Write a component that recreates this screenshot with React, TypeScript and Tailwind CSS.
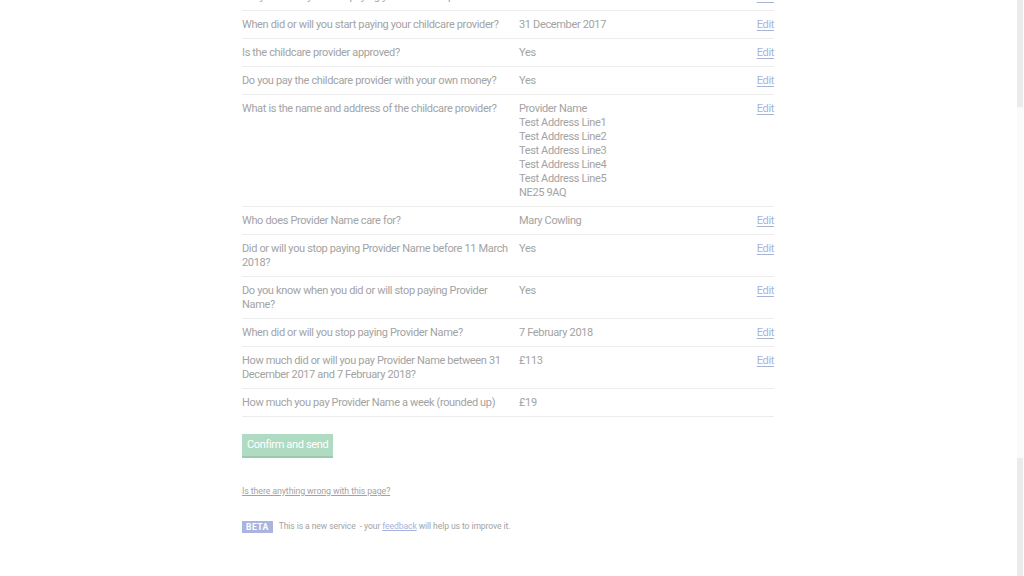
import React from "react";

interface Row {
  question: string;
  answer: string[];
  edit: boolean;
}

const rows: Row[] = [
  { question: "Did you or will you start paying your childcare provider?", answer: ["Yes"], edit: true },
  { question: "When did or will you start paying your childcare provider?", answer: ["31 December 2017"], edit: true },
  { question: "Is the childcare provider approved?", answer: ["Yes"], edit: true },
  { question: "Do you pay the childcare provider with your own money?", answer: ["Yes"], edit: true },
  {
    question: "What is the name and address of the childcare provider?",
    answer: [
      "Provider Name",
      "Test Address Line1",
      "Test Address Line2",
      "Test Address Line3",
      "Test Address Line4",
      "Test Address Line5",
      "NE25 9AQ",
    ],
    edit: true,
  },
  { question: "Who does Provider Name care for?", answer: ["Mary Cowling"], edit: true },
  { question: "Did or will you stop paying Provider Name before 11 March 2018?", answer: ["Yes"], edit: true },
  { question: "Do you know when you did or will stop paying Provider Name?", answer: ["Yes"], edit: true },
  { question: "When did or will you stop paying Provider Name?", answer: ["7 February 2018"], edit: true },
  {
    question: "How much did or will you pay Provider Name between 31 December 2017 and 7 February 2018?",
    answer: ["£113"],
    edit: true,
  },
  { question: "How much you pay Provider Name a week (rounded up)", answer: ["£19"], edit: false },
];

function SummaryRow({ row }: { row: Row }) {
  return (
    <div className="grid grid-cols-[277px_1fr_auto] border-b border-[#ececec] pt-[7px] pb-[6px] leading-[14px]">
      <div className="pr-[6px]">{row.question}</div>
      <div>
        {row.answer.map((line, i) => (
          <div key={i}>{line}</div>
        ))}
      </div>
      <div className="text-right">
        {row.edit && <a className="underline text-[#a7b3db] underline-offset-2 decoration-1">Edit</a>}
      </div>
    </div>
  );
}

export default function App() {
  return (
    <div className="w-[1024px] h-[576px] overflow-hidden bg-white flex font-['Roboto',sans-serif] text-[#a3a3a3]">
      {/* page */}
      <div className="flex-1">
        <div className="w-[532px] mx-auto -mt-[17px] text-[11px] tracking-[-0.35px]">
          {rows.map((row, i) => (
            <SummaryRow key={i} row={row} />
          ))}

          <button className="mt-[17px] bg-[#aedbc2] text-white text-[11px] px-[5px] h-[24px] border-b-2 border-[#9cc9b0] leading-[22px]">
            Confirm and send
          </button>

          <div className="mt-[27px] text-[8.8px] tracking-[-0.1px] underline underline-offset-1">
            Is there anything wrong with this page?
          </div>

          <div className="mt-[22px] flex items-center gap-[6px] text-[8.6px] tracking-[-0.1px]">
            <span className="bg-[#a9b5de] text-white font-bold px-[4px] leading-[12px] tracking-[0.4px]">BETA</span>
            <span>
              This is a new service &nbsp;- your{" "}
              <a className="underline text-[#a7b3db]">feedback</a> will help us to improve it.
            </span>
          </div>
        </div>
      </div>

      {/* scrollbar */}
      <div className="w-[8px] flex flex-col px-px">
        <div className="h-[107px] bg-[#ebebeb]" />
        <div className="h-[351px] bg-[#fafafa]" />
        <div className="flex-1 bg-[#ebebeb]" />
      </div>
    </div>
  );
}
